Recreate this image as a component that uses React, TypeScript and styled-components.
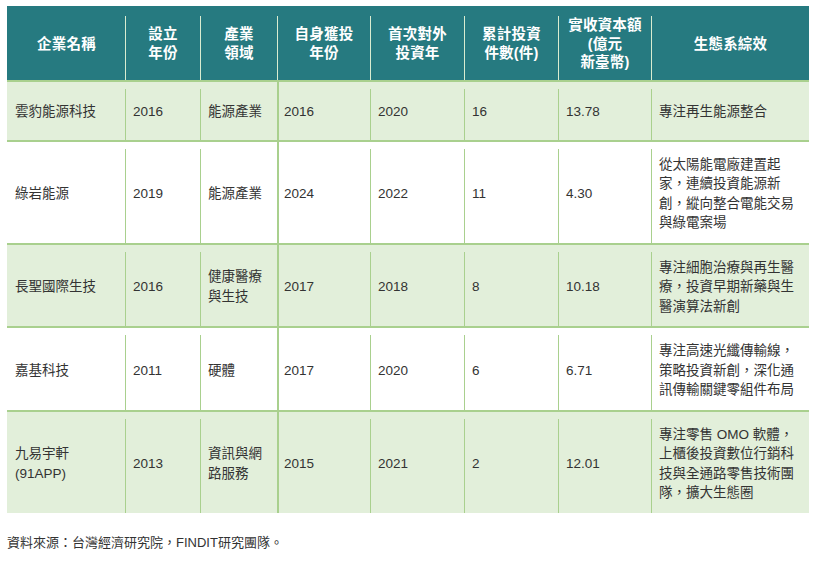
import React from "react";
import styled, { createGlobalStyle } from "styled-components";

const GlobalStyle = createGlobalStyle`
  html, body { margin: 0; padding: 0; background: #ffffff; }
  body { font-family: "Liberation Sans", "Noto Sans CJK TC", sans-serif; }
`;

const COLS = "118px 75px 77px 93px 94px 94px 93px 1fr";
const GREEN_LINE = "#a9d08e";
const ROW_TINT = "#e2efda";
const HEAD_BG = "#267a80";

const Page = styled.div`
  padding: 6px 7px 0 7px;
  width: 802px;
`;

const Table = styled.div`
  display: flex;
  flex-direction: column;
  width: 802px;
`;

const HeadRow = styled.div`
  display: grid;
  grid-template-columns: ${COLS};
  background: ${HEAD_BG};
`;

const HeadCell = styled.div<{ $first?: boolean }>`
  margin-top: 10px;
  padding: 0 6px 8px;
  border-left: 1px solid ${(p) => (p.$first ? "transparent" : "#d9ecd0")};
  display: flex;
  align-items: center;
  justify-content: center;
  text-align: center;
  color: #ffffff;
  font-weight: 700;
  font-size: 14.5px;
  line-height: 18.5px;
  letter-spacing: 0.2px;
  white-space: pre-line;
`;

const BodyRow = styled.div<{ $tint: boolean }>`
  display: grid;
  grid-template-columns: ${COLS};
  background: ${(p) => (p.$tint ? ROW_TINT : "#ffffff")};
  border-top: 2px solid ${GREEN_LINE};
`;

const Cell = styled.div<{ $first?: boolean; $solid?: boolean }>`
  box-sizing: border-box;
  margin-top: ${(p) => (p.$solid ? "0" : "7px")};
  padding: ${(p) => (p.$solid ? "13px 7px 10px 5px" : "6px 7px 10px 7px")};
  min-height: ${(p) => (p.$solid ? "58px" : "51px")};
  border-left: ${(p) =>
    p.$first ? "1px solid transparent" : p.$solid ? `2px solid ${GREEN_LINE}` : `1px solid ${GREEN_LINE}`};
  display: flex;
  align-items: center;
  color: #333333;
  font-size: 13.5px;
  line-height: 19.5px;
  white-space: pre-line;
`;

const Source = styled.p`
  margin: 20px 0 0 0;
  color: #333333;
  font-size: 13px;
  line-height: 19px;
`;

const headers = [
  "企業名稱",
  "設立\n年份",
  "產業\n領域",
  "自身獲投\n年份",
  "首次對外\n投資年",
  "累計投資\n件數(件)",
  "實收資本額\n(億元\n新臺幣)",
  "生態系綜效",
];

type Company = {
  name: string;
  founded: string;
  industry: string;
  funded: string;
  firstInvest: string;
  count: string;
  capital: string;
  synergy: string;
};

const rows: Company[] = [
  {
    name: "雲豹能源科技",
    founded: "2016",
    industry: "能源產業",
    funded: "2016",
    firstInvest: "2020",
    count: "16",
    capital: "13.78",
    synergy: "專注再生能源整合",
  },
  {
    name: "綠岩能源",
    founded: "2019",
    industry: "能源產業",
    funded: "2024",
    firstInvest: "2022",
    count: "11",
    capital: "4.30",
    synergy: "從太陽能電廠建置起\n家，連續投資能源新\n創，縱向整合電能交易\n與綠電案場",
  },
  {
    name: "長聖國際生技",
    founded: "2016",
    industry: "健康醫療\n與生技",
    funded: "2017",
    firstInvest: "2018",
    count: "8",
    capital: "10.18",
    synergy: "專注細胞治療與再生醫\n療，投資早期新藥與生\n醫演算法新創",
  },
  {
    name: "嘉基科技",
    founded: "2011",
    industry: "硬體",
    funded: "2017",
    firstInvest: "2020",
    count: "6",
    capital: "6.71",
    synergy: "專注高速光纖傳輸線，\n策略投資新創，深化通\n訊傳輸關鍵零組件布局",
  },
  {
    name: "九易宇軒\n(91APP)",
    founded: "2013",
    industry: "資訊與網\n路服務",
    funded: "2015",
    firstInvest: "2021",
    count: "2",
    capital: "12.01",
    synergy: "專注零售 OMO 軟體，\n上櫃後投資數位行銷科\n技與全通路零售技術團\n隊，擴大生態圈",
  },
];

export default function App() {
  return (
    <>
      <GlobalStyle />
      <Page>
        <Table>
          <HeadRow>
            {headers.map((h, i) => (
              <HeadCell key={i} $first={i === 0}>
                {h}
              </HeadCell>
            ))}
          </HeadRow>
          {rows.map((r, i) => (
            <BodyRow key={r.name} $tint={i % 2 === 0}>
              <Cell $first>{r.name}</Cell>
              <Cell>{r.founded}</Cell>
              <Cell>{r.industry}</Cell>
              <Cell $solid>{r.funded}</Cell>
              <Cell>{r.firstInvest}</Cell>
              <Cell>{r.count}</Cell>
              <Cell>{r.capital}</Cell>
              <Cell>{r.synergy}</Cell>
            </BodyRow>
          ))}
        </Table>
        <Source>資料來源：台灣經濟研究院，FINDIT研究團隊。</Source>
      </Page>
    </>
  );
}
